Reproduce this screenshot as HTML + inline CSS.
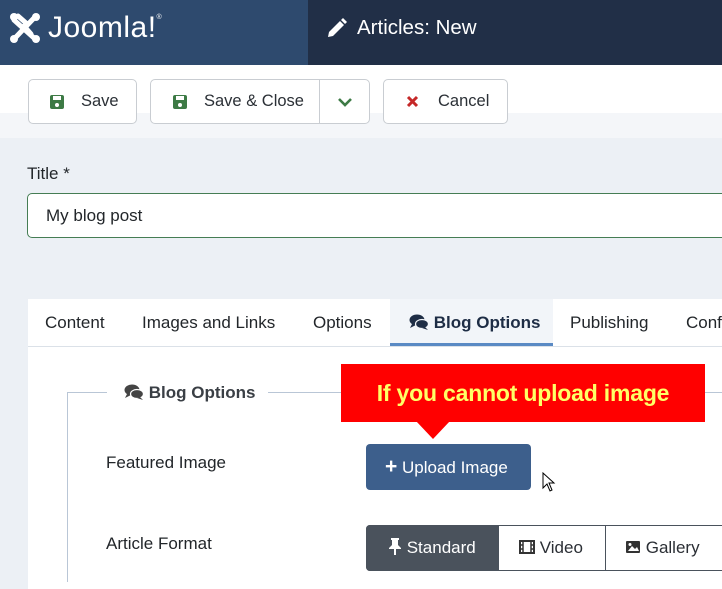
<!DOCTYPE html>
<html><head><meta charset="utf-8"><style>
*{box-sizing:border-box;margin:0;padding:0}
body{width:722px;height:579px;overflow:hidden;background:#ecf0f5;font-family:"Liberation Sans",sans-serif;position:relative;color:#22262a}
.abs{position:absolute}
.hdrL{left:0;top:0;width:308px;height:65px;background:#2e4a6e}
.hdrR{left:308px;top:0;width:414px;height:65px;background:#212f47}
.tb{left:0;top:65px;width:722px;height:48px;background:#fff}
.tb2{left:0;top:113px;width:722px;height:25px;background:#f4f6f9}
.btn{position:absolute;top:79px;height:45px;border:1px solid #c9cdd2;border-radius:5px;background:#fff;font-size:16.5px;color:#2b3036;display:flex;align-items:center}
.card{left:28px;top:299px;width:700px;height:290px;background:#fff}
.tab{position:absolute;top:299px;height:47px;line-height:48px;font-size:17px;color:#22262a}
</style></head><body>
<div class="abs hdrL"></div><div class="abs hdrR"></div>
<svg class="abs" style="left:7px;top:11px" width="36" height="34" viewBox="0 0 36 34"><g fill="none" stroke="#fff" stroke-width="5" stroke-linecap="round"><path d="M7 9 L27 27"/><path d="M27 7 L9 26"/><path d="M11 5 L19 12"/><path d="M24 23 L17 15"/></g><g fill="#fff"><circle cx="7" cy="6" r="4"/><circle cx="29" cy="6" r="4"/><circle cx="7" cy="28" r="4"/><circle cx="29" cy="28" r="4"/></g></svg>
<div class="abs" style="left:48px;top:11px;font-size:30px;color:#fff;letter-spacing:0.5px">Joomla!<sup style="font-size:7px;vertical-align:18px">®</sup></div>
<svg class="abs" style="left:326px;top:17px" width="22" height="22" viewBox="0 0 22 22"><path d="M3 15 L14 4 L18 8 L7 19 L2 20 Z" fill="#fff"/><path d="M15 3 L17 1 L21 5 L19 7 Z" fill="#fff"/></svg>
<div class="abs" style="left:357px;top:16px;font-size:20.5px;color:#fff">Articles: New</div>
<div class="abs tb"></div><div class="abs tb2"></div>
<div class="btn" style="left:28px;width:109px"><svg style="margin-left:20px" width="16" height="16" viewBox="0 0 16 16"><rect x="1" y="1" width="14" height="14" rx="2" fill="#3d7a45"/><rect x="4" y="2" width="8" height="4" fill="#fff"/><circle cx="8" cy="11" r="2" fill="#fff"/></svg><span style="margin-left:16px">Save</span></div>
<div class="btn" style="left:150px;width:220px"><svg style="margin-left:21px" width="16" height="16" viewBox="0 0 16 16"><rect x="1" y="1" width="14" height="14" rx="2" fill="#3d7a45"/><rect x="4" y="2" width="8" height="4" fill="#fff"/><circle cx="8" cy="11" r="2" fill="#fff"/></svg><span style="margin-left:16px">Save &amp; Close</span><span style="position:absolute;left:168px;top:0;height:43px;border-left:1px solid #c9cdd2"></span><svg style="position:absolute;left:186px;top:16px" width="16" height="12" viewBox="0 0 16 12"><path d="M2 3 L8 9 L14 3" fill="none" stroke="#3d7a45" stroke-width="2.6"/></svg></div>
<div class="btn" style="left:383px;width:125px"><svg style="margin-left:22px" width="13" height="13" viewBox="0 0 13 13"><path d="M2 2 L11 11 M11 2 L2 11" stroke="#c52828" stroke-width="3"/></svg><span style="margin-left:19px">Cancel</span></div>
<div class="abs" style="left:27px;top:164px;font-size:17px;color:#22262a">Title *</div>
<div class="abs" style="left:27px;top:193px;width:710px;height:45px;background:#fff;border:1px solid #457d54;border-radius:5px;padding-left:18px;line-height:43px;font-size:17px">My blog post</div>
<div class="abs card"></div>
<div class="abs" style="left:28px;top:346px;width:694px;height:1px;background:#dbe1e8"></div>
<div class="abs" style="left:390px;top:299px;width:163px;height:47px;background:#f2f5f9;border-bottom:3px solid #5a8ac4"></div>
<div class="tab" style="left:45px">Content</div>
<div class="tab" style="left:142px">Images and Links</div>
<div class="tab" style="left:313px">Options</div>
<div class="tab" style="left:409px;font-weight:bold;color:#1e2d45"><svg width="20" height="16" viewBox="0 0 20 16" style="vertical-align:-2px"><ellipse cx="8" cy="6" rx="7.5" ry="5.5" fill="#1e2d45"/><path d="M3 10 L1 14 L7 11 Z" fill="#1e2d45"/><ellipse cx="13" cy="10" rx="6.5" ry="4.5" fill="#1e2d45" stroke="#f2f5f9" stroke-width="1.2"/><path d="M16 13 L19 16 L13 14 Z" fill="#1e2d45"/></svg> Blog Options</div>
<div class="tab" style="left:570px">Publishing</div>
<div class="tab" style="left:686px">Conf</div>
<div class="abs" style="left:67px;top:392px;width:1px;height:190px;background:#b9c6d6"></div>
<div class="abs" style="left:67px;top:392px;width:40px;height:1px;background:#b9c6d6"></div>
<div class="abs" style="left:268px;top:392px;width:460px;height:1px;background:#b9c6d6"></div>
<div class="abs" style="left:124px;top:383px;font-size:17px;font-weight:bold;color:#3a3f45"><svg width="20" height="16" viewBox="0 0 20 16" style="vertical-align:-2px"><ellipse cx="8" cy="6" rx="7.5" ry="5.5" fill="#444"/><path d="M3 10 L1 14 L7 11 Z" fill="#444"/><ellipse cx="13" cy="10" rx="6.5" ry="4.5" fill="#444" stroke="#fff" stroke-width="1.2"/><path d="M16 13 L19 16 L13 14 Z" fill="#444"/></svg> Blog Options</div>
<div class="abs" style="left:341px;top:364px;width:364px;height:58px;background:#ff0000;color:#ffff66;font-weight:bold;font-size:23px;text-align:center;line-height:58px;letter-spacing:-0.2px">If you cannot upload image</div>
<div class="abs" style="left:416px;top:421px;width:0;height:0;border-left:17px solid transparent;border-right:17px solid transparent;border-top:18px solid #ff0000"></div>
<div class="abs" style="left:106px;top:453px;font-size:17px">Featured Image</div>
<div class="abs" style="left:366px;top:444px;width:165px;height:46px;background:#3d5f8c;border-radius:4px;color:#fff;font-size:17px;line-height:46px;padding-left:19px"><b style="font-size:21px">+</b> Upload Image</div>
<svg class="abs" style="left:542px;top:472px" width="14" height="22" viewBox="0 0 14 22"><path d="M1 1 L1 16 L5 12 L8 19 L10 18 L7 11 L12 11 Z" fill="#fff" stroke="#000" stroke-width="1"/></svg>
<div class="abs" style="left:106px;top:534px;font-size:17px">Article Format</div>
<div class="abs" style="left:366px;top:525px;width:370px;height:46px;border:1px solid #4a525c;border-radius:4px;background:#fff"></div>
<div class="abs" style="left:366px;top:525px;width:133px;height:46px;background:#4a525c;border-radius:4px 0 0 4px;color:#fff;font-size:17px;line-height:46px;padding-left:22px"><svg width="14" height="18" viewBox="0 0 14 18" style="vertical-align:-2px"><path d="M3 1 H11 V3 H10 V8 L13 11 V12 H1 V11 L4 8 V3 H3 Z" fill="#fff"/><rect x="6" y="12" width="2" height="6" fill="#fff"/></svg> Standard</div>
<div class="abs" style="left:605px;top:525px;width:1px;height:46px;background:#4a525c"></div>
<div class="abs" style="left:519px;top:525px;font-size:17px;line-height:46px;color:#2b2f35"><svg width="16" height="14" viewBox="0 0 16 14" style="vertical-align:-1px"><rect x="1" y="1" width="14" height="12" fill="none" stroke="#333" stroke-width="2"/><path d="M4 1 V13 M12 1 V13 M1 5 H4 M1 9 H4 M12 5 H15 M12 9 H15" stroke="#333" stroke-width="1.5"/></svg> Video</div>
<div class="abs" style="left:625px;top:525px;font-size:17px;line-height:46px;color:#2b2f35"><svg width="16" height="14" viewBox="0 0 16 14" style="vertical-align:-1px"><rect x="1" y="1" width="14" height="12" rx="1" fill="#333"/><path d="M3 11 L7 6 L10 9 L12 7 L14 11 Z" fill="#fff"/><circle cx="5" cy="4.5" r="1.5" fill="#fff"/></svg> Gallery</div>
</body></html>
